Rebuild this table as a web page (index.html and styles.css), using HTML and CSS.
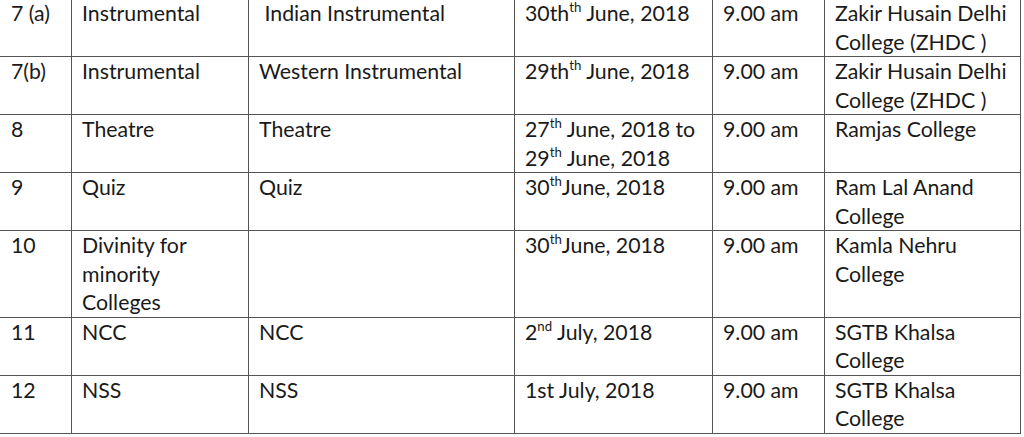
FILE: index.html
```html
<!DOCTYPE html>
<html>
<head>
<meta charset="utf-8">
<link rel="stylesheet" href="styles.css">
</head>
<body>
<table class="schedule">
<colgroup>
<col class="c-no"><col class="c-event"><col class="c-sub"><col class="c-date"><col class="c-time"><col class="c-venue">
</colgroup>
<tbody>
<tr><td>7 (a)</td><td>Instrumental</td><td>&nbsp;Indian Instrumental</td><td>30th<sup>th</sup> June, 2018</td><td>9.00 am</td><td>Zakir Husain Delhi College (ZHDC )</td></tr>
<tr><td>7(b)</td><td>Instrumental</td><td>Western Instrumental</td><td>29th<sup>th</sup> June, 2018</td><td>9.00 am</td><td>Zakir Husain Delhi College (ZHDC )</td></tr>
<tr><td>8</td><td>Theatre</td><td>Theatre</td><td>27<sup>th</sup> June, 2018 to 29<sup>th</sup> June, 2018</td><td>9.00 am</td><td>Ramjas College</td></tr>
<tr><td>9</td><td>Quiz</td><td>Quiz</td><td>30<sup>th</sup>June, 2018</td><td>9.00 am</td><td>Ram Lal Anand College</td></tr>
<tr><td>10</td><td>Divinity for<br>minority<br>Colleges</td><td></td><td>30<sup>th</sup>June, 2018</td><td>9.00 am</td><td>Kamla Nehru College</td></tr>
<tr><td>11</td><td>NCC</td><td>NCC</td><td>2<sup>nd</sup> July, 2018</td><td>9.00 am</td><td>SGTB Khalsa College</td></tr>
<tr><td>12</td><td>NSS</td><td>NSS</td><td>1st July, 2018</td><td>9.00 am</td><td>SGTB Khalsa College</td></tr>
</tbody>
</table>
</body>
</html>
```
FILE: styles.css
```css
html, body {
  margin: 0;
  padding: 0;
  background: #fff;
}
body {
  overflow: hidden;
}
.schedule {
  border-collapse: collapse;
  table-layout: fixed;
  width: 1021px;
  margin-top: -2px;
  margin-left: -1px;
  font-family: Lato, "Open Sans", sans-serif;
  font-size: 21.3px;
  line-height: 28.5px;
  color: #1a1a1a;
}
.c-no { width: 72px; }
.c-event { width: 177px; }
.c-sub { width: 266px; }
.c-date { width: 198px; }
.c-time { width: 112px; }
.c-venue { width: 196px; }
.schedule td {
  border: 1px solid #555;
  padding: 0 6px 0 10px;
  vertical-align: top;
  height: 57px;
}
.schedule td:first-child {
  padding-left: 11px;
}
.schedule sup {
  font-size: 0.62em;
  line-height: 0;
  vertical-align: 0.65em;
}
```
